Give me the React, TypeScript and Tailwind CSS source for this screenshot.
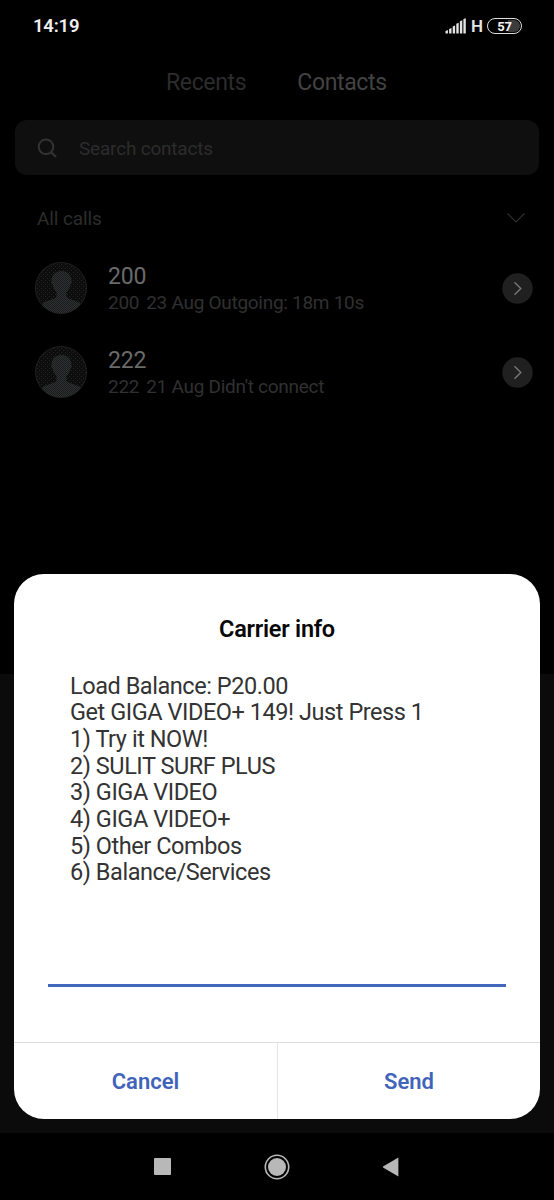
import React from "react";

type Call = { name: string; detail: string };

const calls: Call[] = [
  { name: "200", detail: "23 Aug Outgoing: 18m 10s" },
  { name: "222", detail: "21 Aug Didn't connect" },
];

const lines = [
  "Load Balance: P20.00",
  "Get GIGA VIDEO+ 149! Just Press 1",
  "1) Try it NOW!",
  "2) SULIT SURF PLUS",
  "3) GIGA VIDEO",
  "4) GIGA VIDEO+",
  "5) Other Combos",
  "6) Balance/Services",
];

function Signal() {
  return (
    <svg width="22" height="16" viewBox="0 0 22 16" fill="#e4e4e4">
      <path d="M.5 13l2.400-1v3.500H.5z" />
      <path d="M4.100 11l2.400-1v5.500H4.100z" />
      <path d="M7.700 8.400l2.400-1v8.100H7.700z" />
      <path d="M11.300 5.800l2.400-1v10.700h-2.400z" />
      <path d="M14.900 3.200l2.400-1v13.300h-2.400z" />
      <path d="M18.400.9l2.400-.7v15.300h-2.400z" />
    </svg>
  );
}

function Battery() {
  return (
    <div className="relative flex h-4 w-[35px] items-center justify-center overflow-hidden rounded-full border-[1.5px] border-[#dedede]">
      <div className="absolute inset-y-px right-px w-3 rounded-r-full bg-[#3c3c3c]" />
      <span className="relative pt-px text-[13px] leading-none font-bold tracking-[-0.3px] text-[#f2f2f2]">57</span>
    </div>
  );
}

function Avatar() {
  return (
    <svg width="52" height="52" viewBox="0 0 52 52">
      <defs>
        <clipPath id="disc">
          <circle cx="26" cy="26" r="25.5" />
        </clipPath>
        <pattern id="grain" width="4" height="4" patternUnits="userSpaceOnUse">
          <rect width="1" height="1" fill="#242424" />
          <rect x="2" y="2" width="1" height="1" fill="#242424" />
        </pattern>
        <pattern id="mesh" width="2" height="2" patternUnits="userSpaceOnUse">
          <rect width="2" height="2" fill="#1a1c1c" />
          <rect width="1" height="1" fill="#2d3131" />
          <rect x="1" y="1" width="1" height="1" fill="#2d3131" />
        </pattern>
      </defs>
      <circle cx="26" cy="26" r="25.5" fill="#0d0d0d" />
      <circle cx="26" cy="26" r="25.5" fill="url(#grain)" stroke="#202020" strokeWidth="1" />
      <path
        clipPath="url(#disc)"
        fill="url(#mesh)"
        d="M26.500 9c-6 0-9.800 3.500-9.600 9-1 .8-.5 4.500 1 5.500.5 3 2 5 3.600 6.500v4.500c-1 3-9 3.500-14 7V52h38V41.500c-5-3.500-13-4-14-7V30c1.600-1.500 3.100-3.500 3.600-6.500 1.500-1 2-4.700 1-5.500.2-5.500-3.600-9-9.600-9z"
      />
    </svg>
  );
}

function CallRow({ call }: { call: Call }) {
  return (
    <li className="flex h-21 items-center pr-[21px] pl-[35px]">
      <Avatar />
      <div className="ml-[21px] flex flex-1 flex-col pt-[3px]">
        <span className="text-[23px] leading-[27px] tracking-[-0.2px] text-[#6a6a6a]">{call.name}</span>
        <span className="flex gap-[7px] text-[19px] leading-[26px] tracking-[-0.28px] text-[#303030]">
          <span>{call.name}</span>
          <span>{call.detail}</span>
        </span>
      </div>
      <svg width="31" height="31" viewBox="0 0 31 31" fill="none">
        <circle cx="15.500" cy="15.500" r="15.200" fill="#202020" />
        <path d="M12.500 9.300l6.300 6.200-6.300 6.200" stroke="#777" strokeWidth="1.400" />
      </svg>
    </li>
  );
}

export default function App() {
  return (
    <div className="relative flex h-[1200px] w-[554px] flex-col overflow-hidden bg-black font-['Roboto',sans-serif]">
      <header className="flex h-[51px] shrink-0 items-center justify-between pr-8 pl-[33px]">
        <span className="pt-[2px] text-[18.5px] leading-none font-semibold tracking-[-0.2px] text-[#efefef]">14:19</span>
        <div className="flex items-center gap-[4px]">
          <Signal />
          <span className="pt-px text-[17px] leading-none font-semibold text-[#e4e4e4]">H</span>
          <Battery />
        </div>
      </header>

      <nav className="flex h-[61px] shrink-0 items-center gap-[51px] pt-[2px] pl-[166px] text-[23px] leading-none tracking-[-0.35px]">
        <span className="text-[#2c2c2c]">Recents</span>
        <span className="text-[#434343]">Contacts</span>
      </nav>

      <div className="mx-[15px] mt-2 flex h-[55px] shrink-0 items-center rounded-xl bg-[#0f0f0f] pl-[21px]">
        <svg width="22" height="22" viewBox="0 0 22 22" fill="none" stroke="#333">
          <circle cx="10" cy="9.800" r="7.300" strokeWidth="2" />
          <path d="M15 15l5 5" strokeWidth="2.200" />
        </svg>
        <span className="ml-[21px] pt-px text-[19px] leading-none tracking-[-0.2px] text-[#2c2c2c]">
          Search contacts
        </span>
      </div>

      <div className="mt-[28px] flex h-[30px] shrink-0 items-center justify-between pr-7 pl-[37px]">
        <span className="text-[19px] leading-none tracking-[-0.1px] text-[#2c2c2c]">All calls</span>
        <svg width="20" height="12" viewBox="0 0 20 12" fill="none" stroke="#303030" strokeWidth="1.200">
          <path d="M1.500 1.500L10 10l8.500-8.500" />
        </svg>
      </div>

      <ul className="mt-[13px] flex flex-col">
        {calls.map((call) => (
          <CallRow key={call.name} call={call} />
        ))}
      </ul>

      <div className="mt-auto h-[459px] shrink-0 bg-[#0b0b0b]" />

      <footer className="flex h-[67px] shrink-0 items-center justify-center gap-[93px] pr-px">
        <svg width="17" height="17" viewBox="0 0 17 17">
          <rect width="17" height="17" rx="1" fill="#b8b8b8" />
        </svg>
        <svg width="26" height="26" viewBox="0 0 26 26">
          <circle cx="13" cy="13" r="11.700" fill="none" stroke="#b8b8b8" strokeWidth="1.600" />
          <circle cx="13" cy="13" r="9" fill="#b8b8b8" />
        </svg>
        <svg width="17" height="20" viewBox="0 0 17 20">
          <path d="M-.8 10L15.400.5v19z" fill="#b8b8b8" />
        </svg>
      </footer>

      <section
        role="dialog"
        className="absolute top-[574px] left-[14px] flex h-[545px] w-[526px] flex-col overflow-hidden rounded-[30px] bg-white"
      >
        <h2 className="mt-[41px] text-center text-[23.500px] leading-[28px] font-semibold tracking-[-0.25px] text-[#080808]">
          Carrier info
        </h2>
        <div className="mt-[29.5px] pl-14 text-[23.500px] leading-[26.700px] tracking-[-0.45px] text-[#333]">
          {lines.map((line) => (
            <p key={line} className="whitespace-nowrap">
              {line}
            </p>
          ))}
        </div>
        <div className="mx-[34px] mt-auto h-[3px] shrink-0 bg-[#4367bd]" />
        <div className="mt-[55px] flex h-[77px] shrink-0 border-t border-[#dedede] text-[22px] font-semibold text-[#4164ba]">
          <button className="w-[264px] border-r border-[#e6e6e6]">Cancel</button>
          <button className="flex-1">Send</button>
        </div>
      </section>
    </div>
  );
}
